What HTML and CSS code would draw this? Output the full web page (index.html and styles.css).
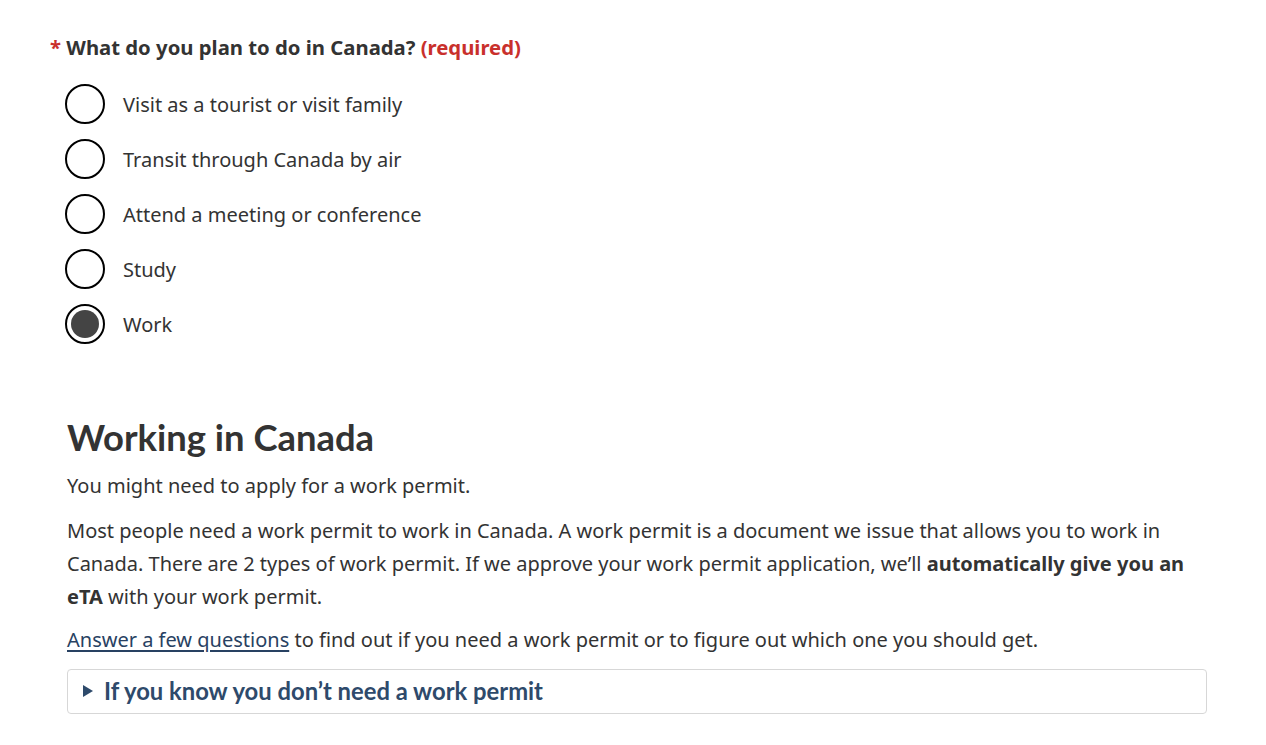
FILE: index.html
```html
<!DOCTYPE html>
<html lang="en">
<head>
<meta charset="utf-8">
<title>What do you plan to do in Canada?</title>
<link rel="stylesheet" href="styles.css">
</head>
<body>
<main class="page">
  <fieldset class="question">
    <legend class="question-label"><span class="asterisk">*</span> What do you plan to do in Canada? <strong class="required">(required)</strong></legend>
    <div class="options">
      <label class="option"><span class="radio"></span><span class="option-text">Visit as a tourist or visit family</span></label>
      <label class="option"><span class="radio"></span><span class="option-text">Transit through Canada by air</span></label>
      <label class="option"><span class="radio"></span><span class="option-text">Attend a meeting or conference</span></label>
      <label class="option"><span class="radio"></span><span class="option-text">Study</span></label>
      <label class="option"><span class="radio radio-checked"></span><span class="option-text">Work</span></label>
    </div>
  </fieldset>

  <section class="result">
    <h2 class="result-title">Working in Canada</h2>
    <p class="para para-intro">You might need to apply for a work permit.</p>
    <p class="para para-body">Most people need a work permit to work in Canada. A work permit is a document we issue that allows you to work in Canada. There are 2 types of work permit. If we approve your work permit application, we’ll <strong>automatically give you an eTA</strong> with your work permit.</p>
    <p class="para para-last"><a class="link" href="#">Answer a few questions</a> to find out if you need a work permit or to figure out which one you should get.</p>
    <details class="details">
      <summary class="summary">If you know you don’t need a work permit</summary>
    </details>
  </section>
</main>
</body>
</html>
```
FILE: styles.css
```css
html, body {
  margin: 0;
  padding: 0;
  background: #fff;
}

body {
  font-family: "Noto Sans", "DejaVu Sans", sans-serif;
  font-size: 20px;
  line-height: 33px;
  color: #333;
}

.page {
  display: flex;
  flex-direction: column;
  padding: 31px 0 0 50px;
}

.question {
  border: 0;
  margin: 0;
  padding: 0;
  min-width: 0;
}

.question-label {
  padding: 0;
  font-weight: 700;
  font-size: 20.3px;
  line-height: 33px;
  color: #333;
}

.asterisk,
.required {
  color: #c9302c;
  font-weight: 700;
}

.options {
  display: flex;
  flex-direction: column;
  gap: 15px;
  margin: 20px 0 0 15px;
}

.option {
  display: flex;
  align-items: center;
  gap: 18px;
  height: 40px;
}

.radio {
  box-sizing: border-box;
  width: 40px;
  height: 40px;
  border: 2px solid #000;
  border-radius: 50%;
  display: flex;
  align-items: center;
  justify-content: center;
  flex: none;
  background: #fff;
}

.radio-checked::after {
  content: "";
  width: 28px;
  height: 28px;
  border-radius: 50%;
  background: #444;
}

.option-text {
  font-size: 20px;
  line-height: 33px;
}

.result {
  margin: 73px 0 0 17px;
  width: 1140px;
}

.result-title {
  font-family: Lato, "Liberation Sans", sans-serif;
  font-weight: 700;
  font-size: 36.4px;
  line-height: 40px;
  margin: 0 0 12px;
  color: #333;
}

.para {
  margin: 0;
}

.para-intro {
  margin-bottom: 12px;
}

.para-body {
  margin-bottom: 9.5px;
}

.para-last {
  margin-bottom: 13px;
}

.para strong {
  font-weight: 700;
}

.link {
  color: #284162;
  text-decoration: underline;
  text-underline-offset: 3px;
}

.details {
  box-sizing: border-box;
  border: 1px solid #d7d7d7;
  border-radius: 4px;
}

.summary {
  display: flex;
  align-items: center;
  gap: 11px;
  list-style: none;
  padding: 5px 15px;
  font-family: Lato, "Liberation Sans", sans-serif;
  font-weight: 700;
  font-size: 23.8px;
  line-height: 33px;
  color: #2e4a6b;
  cursor: pointer;
}

.summary::-webkit-details-marker {
  display: none;
}

.summary::before {
  content: "";
  width: 0;
  height: 0;
  border-top: 6px solid transparent;
  border-bottom: 6px solid transparent;
  border-left: 10px solid #2e4a6b;
  flex: none;
}
```
